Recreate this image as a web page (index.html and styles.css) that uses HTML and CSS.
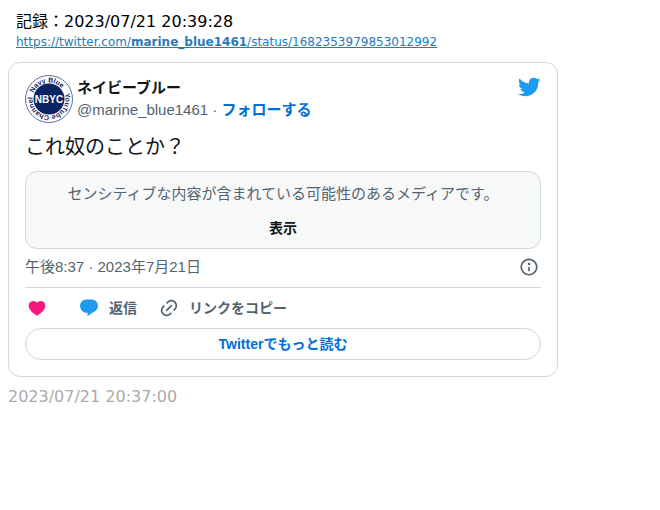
FILE: index.html
```
<!DOCTYPE html>
<html lang="ja">
<head>
  <meta charset="UTF-8">
  <meta name="viewport" content="width=device-width, initial-scale=1.0">
  <title>記録</title>
  <link rel="stylesheet" href="styles.css">
</head>
<body>
  <header class="record">
    <div class="record-time">記録：2023/07/21 20:39:28</div>
    <a class="record-url" href="https://twitter.com/marine_blue1461/status/1682353979853012992">https://twitter.com/<b>marine_blue1461</b>/status/1682353979853012992</a>
  </header>

  <article class="tweet">
    <div class="tweet-header">
      <svg class="avatar" viewBox="0 0 48 48" role="img" aria-label="Navy Blue YouTube Channel">
        <defs>
          <path id="ring" d="M7.5 24A16.5 16.5 0 0 1 40.5 24A16.5 16.5 0 0 1 7.5 24A16.5 16.5 0 0 1 24 7.5"/>
        </defs>
        <circle cx="24" cy="24" r="23.5" fill="#fff" stroke="#5d7399"/>
        <circle cx="24" cy="24" r="15.5" fill="#0a2463"/>
        <text class="avatar-ring"><textPath href="#ring" startOffset="6">Navy Blue</textPath></text>
        <text class="avatar-ring"><textPath href="#ring" startOffset="46">YouTube</textPath></text>
        <text class="avatar-ring"><textPath href="#ring" startOffset="77">Channel</textPath></text>
        <text class="avatar-name" x="24" y="28" text-anchor="middle">NBYC</text>
      </svg>
      <div class="author">
        <div class="author-name">ネイビーブルー</div>
        <div class="author-handle">@marine_blue1461 · <a class="follow" href="#">フォローする</a></div>
      </div>
      <svg class="bird" viewBox="0 0 24 24" aria-hidden="true">
        <path d="M23.643 4.937c-.835.37-1.732.62-2.675.733.962-.576 1.7-1.49 2.048-2.578-.9.534-1.897.922-2.958 1.13-.85-.904-2.06-1.47-3.4-1.47-2.572 0-4.658 2.086-4.658 4.66 0 .364.042.718.12 1.06-3.873-.195-7.304-2.05-9.602-4.868-.4.69-.63 1.49-.63 2.342 0 1.616.823 3.043 2.072 3.878-.764-.025-1.482-.234-2.11-.583v.06c0 2.257 1.605 4.14 3.737 4.568-.392.106-.803.162-1.227.162-.3 0-.593-.028-.877-.082.593 1.85 2.313 3.198 4.352 3.234-1.595 1.25-3.604 1.995-5.786 1.995-.376 0-.747-.022-1.112-.065 2.062 1.323 4.51 2.093 7.14 2.093 8.57 0 13.255-7.098 13.255-13.254 0-.2-.005-.402-.014-.602.91-.658 1.7-1.477 2.323-2.41z"/>
      </svg>
    </div>

    <p class="tweet-text">これ奴のことか？</p>

    <div class="sensitive">
      <p class="sensitive-text">センシティブな内容が含まれている可能性のあるメディアです。</p>
      <button class="show-btn" type="button">表示</button>
    </div>

    <div class="tweet-date">
      <time datetime="2023-07-21T20:37">午後8:37 · 2023年7月21日</time>
      <svg class="info" viewBox="0 0 24 24" aria-hidden="true">
        <path d="M13.5 8.5c0 .83-.67 1.5-1.5 1.5s-1.5-.67-1.5-1.5S11.17 7 12 7s1.5.67 1.5 1.5zM13 17v-5h-2v5h2zm-1 5.25c5.66 0 10.25-4.59 10.25-10.25S17.66 1.75 12 1.75 1.75 6.34 1.75 12 6.34 22.25 12 22.25zM20.25 12c0 4.56-3.69 8.25-8.25 8.25S3.75 16.56 3.75 12 7.44 3.75 12 3.75s8.25 3.69 8.25 8.25z"/>
      </svg>
    </div>

    <div class="actions">
      <button class="action like" type="button" aria-label="いいね">
        <svg viewBox="0 0 24 24" aria-hidden="true">
          <path d="M20.884 13.19c-1.351 2.48-4.001 5.12-8.379 7.67l-.503.3-.504-.3c-4.379-2.55-7.029-5.19-8.382-7.67-1.36-2.5-1.41-4.86-.514-6.67.887-1.79 2.647-2.91 4.601-3.01 1.651-.09 3.368.56 4.798 2.01 1.429-1.45 3.146-2.1 4.796-2.01 1.954.1 3.714 1.22 4.601 3.01.896 1.81.846 4.17-.514 6.67z"/>
        </svg>
      </button>
      <button class="action reply" type="button">
        <svg viewBox="0 0 24 24" aria-hidden="true">
          <path d="M8.8 1.8h6.4c4.2 0 7.5 3.4 7.5 7.7 0 2.9-1.6 5.2-4 6.7-2.3 1.5-5 2.7-7.6 5.2-.4.3-.9.1-.9-.4v-3.3H9.3c-4.4 0-8-3.7-8-8.2 0-4.3 3.300-7.700 7.500-7.700z"/>
        </svg>
        返信
      </button>
      <button class="action copy" type="button">
        <svg viewBox="0 0 24 24" aria-hidden="true">
          <path d="M18.36 5.64c-1.95-1.96-5.11-1.96-7.07 0L9.88 7.05 8.46 5.64l1.42-1.42c2.73-2.73 7.16-2.73 9.9 0 2.73 2.74 2.73 7.17 0 9.9l-1.42 1.42-1.41-1.42 1.41-1.41c1.96-1.96 1.96-5.12 0-7.07zm-2.12 3.53l-7.07 7.07-1.41-1.41 7.07-7.07 1.41 1.41zm-12.02.71l1.42-1.42 1.41 1.42-1.41 1.41c-1.96 1.96-1.96 5.12 0 7.07 1.95 1.96 5.11 1.96 7.07 0l1.41-1.41 1.42 1.41-1.42 1.42c-2.73 2.73-7.16 2.73-9.9 0-2.73-2.74-2.73-7.17 0-9.9z"/>
        </svg>
        リンクをコピー
      </button>
    </div>

    <a class="read-more" href="#">Twitterでもっと読む</a>
  </article>

  <div class="posted">2023/07/21 20:37:00</div>
</body>
</html>
```
FILE: styles.css
```
body {
  margin: 8px;
  background-color: #fff;
  font-family: "DejaVu Sans", "Noto Sans CJK JP", sans-serif;
  font-size: 16px;
  line-height: 20px;
  color: #000;
}

.record {
  padding: 4px 8px 10px;
}

.record-url {
  display: block;
  font-size: 12px;
  color: #2a7ab9;
}

.tweet {
  box-sizing: border-box;
  max-width: 550px;
  padding: 12px 16px 16px;
  border: 1px solid #cfd9de;
  border-radius: 12px;
  font-family: "Liberation Sans", "Noto Sans CJK JP", sans-serif;
  font-size: 15px;
  color: #0f1419;
}

.tweet-header {
  display: flex;
  align-items: flex-start;
}

.avatar {
  width: 48px;
  height: 48px;
  margin-right: 4px;
}

.avatar-ring {
  font-family: "Liberation Sans", sans-serif;
  font-size: 7px;
  font-weight: bold;
  fill: #0a2463;
}

.avatar-name {
  font-family: "Liberation Sans", sans-serif;
  font-size: 10px;
  font-weight: bold;
  fill: #fff;
}

.author {
  flex: 1;
  padding-top: 2px;
  line-height: 22px;
}

.author-name {
  font-weight: bold;
}

.author-handle {
  color: #536471;
}

.follow {
  color: #006fd6;
  font-weight: bold;
  text-decoration: none;
}

.bird {
  width: 24px;
  height: 24px;
  fill: #1d9bf0;
}

.tweet-text {
  margin: 12px 0;
  font-size: 20px;
  line-height: 24px;
}

.sensitive {
  padding: 12px 12px 10px;
  border: 1px solid #cfd9de;
  border-radius: 12px;
  background-color: #f7f9f9;
  text-align: center;
}

.sensitive-text {
  margin: 0 0 14px;
  color: #536471;
}

.show-btn {
  display: block;
  margin: 0 auto;
  padding: 0;
  border: none;
  background: none;
  font-family: inherit;
  font-size: 14px;
  font-weight: bold;
  line-height: 20px;
  color: #0f1419;
  cursor: pointer;
}

.tweet-date {
  display: flex;
  align-items: center;
  justify-content: space-between;
  padding: 8px 2px 10px 0;
  border-bottom: 1px solid #cfd9de;
  color: #536471;
}

.info {
  width: 20px;
  height: 20px;
  fill: #536471;
}

.actions {
  display: flex;
  gap: 22px;
  padding: 10px 2px;
}

.action {
  display: flex;
  align-items: center;
  gap: 10px;
  padding: 0;
  border: none;
  background: none;
  font-family: inherit;
  font-size: 14px;
  font-weight: bold;
  line-height: 20px;
  color: #536471;
  cursor: pointer;
}

.action svg {
  width: 20px;
  height: 20px;
  fill: #536471;
}

.like {
  margin-right: 10px;
}

.like svg {
  fill: #f91880;
}

.reply svg {
  fill: #1d9bf0;
}

.read-more {
  display: block;
  border: 1px solid #cfd9de;
  border-radius: 16px;
  font-size: 14px;
  font-weight: bold;
  line-height: 30px;
  text-align: center;
  text-decoration: none;
  color: #006fd6;
}

.posted {
  margin-top: 10px;
  color: #aaa;
}
```
